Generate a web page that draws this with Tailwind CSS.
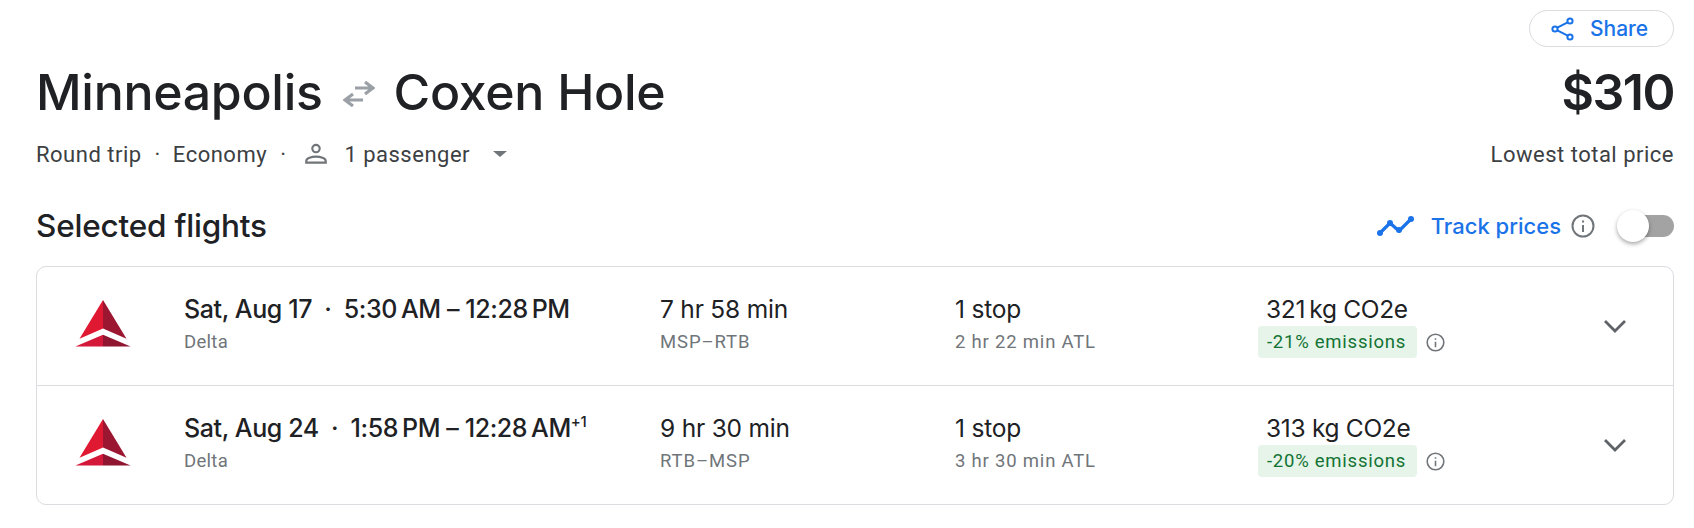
<!DOCTYPE html>
<html lang="en">
<head>
  <meta charset="UTF-8">
  <title>Flights</title>
  <script src="https://cdn.jsdelivr.net/npm/@tailwindcss/browser@4"></script>
</head>
<body class="bg-white font-['Roboto',sans-serif] text-[#3c4043] overflow-hidden">
  <div class="w-[1694px] h-[528px] pl-[36px] pr-[20px] pt-[10px]">

    <!-- share -->
    <div class="flex justify-end h-[37px]">
      <button class="w-[145px] h-[37px] rounded-full border border-[#dadce0] flex items-center pl-[21px] gap-[15px] text-[#1a73e8] font-['Inter',sans-serif] font-medium text-[21px]">
        <svg class="w-[24px] h-[24px]" viewBox="0 0 24 24" fill="none" stroke="#1a73e8" stroke-width="2"><circle cx="19" cy="4" r="2.6"/><circle cx="4" cy="12" r="2.6"/><circle cx="19" cy="20" r="2.6"/><path d="M6.3 10.7 16.7 5.3M6.3 13.3l10.4 5.4"/></svg>
        Share
      </button>
    </div>

    <!-- title + price -->
    <div class="flex justify-between items-center h-[64px] mt-[13px] font-['Inter',sans-serif] font-medium text-[#202124]">
      <div class="flex items-center text-[50px] tracking-[-0.3px]">
        <span>Minneapolis</span>
        <svg class="w-[32px] h-[26px] ml-[20px] mr-[19px] mt-[3px]" viewBox="0 0 32 26" fill="none" stroke="#9aa0a6" stroke-width="3.2"><path d="M31 7H12M22 1l8 6-8 6M1 19h19M10 13l-8 6 8 6"/></svg>
        <span>Coxen Hole</span>
      </div>
      <div class="text-[50px] font-semibold tracking-[-1.5px]">$310</div>
    </div>

    <!-- trip options -->
    <div class="flex justify-between items-center h-[28px] mt-[16px] text-[22px] tracking-[0.5px]">
      <div class="flex items-center">
        <span>Round trip</span>
        <span class="ml-[13px] mr-[12px]">·</span>
        <span>Economy</span>
        <span class="ml-[13px] mr-[17px]">·</span>
        <svg class="w-[26px] h-[26px] mr-[15px]" viewBox="0 0 24 24" fill="none" stroke="#70757a" stroke-width="2"><circle cx="12" cy="7" r="3.4"/><path d="M3 20v-1.6c0-2.4 5-4 9-4s9 1.600 9 4V20z"/></svg>
        <span>1 passenger</span>
        <span class="ml-[23px] w-0 h-0 border-x-[7px] border-x-transparent border-t-[6px] border-t-[#70757a]"></span>
      </div>
      <div>Lowest total price</div>
    </div>

    <!-- section heading -->
    <div class="flex justify-between items-center h-[40px] mt-[38px]">
      <h2 class="font-['Inter',sans-serif] font-medium text-[31.5px] text-[#202124] tracking-[-0.2px]">Selected flights</h2>
      <div class="flex items-center">
        <svg class="w-[37px] h-[20px]" viewBox="0 0 37 20" fill="none" stroke="#1a73e8" stroke-width="3.2"><path d="M3 17 13 7l9 8L34 3"/><g fill="#1a73e8" stroke="none"><circle cx="3" cy="17" r="3"/><circle cx="13" cy="7" r="3"/><circle cx="22" cy="14" r="3"/><circle cx="34" cy="3" r="3"/></g></svg>
        <span class="ml-[17px] font-['Inter',sans-serif] font-medium text-[22px] text-[#1a73e8]">Track prices</span>
        <svg class="w-[24px] h-[24px] ml-[10px]" viewBox="0 0 24 24" fill="none" stroke="#70757a" stroke-width="2"><circle cx="12" cy="12" r="10.500"/><path d="M12 11v7M12 6.500v2"/></svg>
        <div class="relative w-[56px] h-[22px] ml-[23px] rounded-full bg-[#a3a3a3]">
          <div class="absolute left-[-1px] top-[-5px] w-[32px] h-[32px] rounded-full bg-white shadow-[0_2px_4px_rgba(0,0,0,0.35)]"></div>
        </div>
      </div>
    </div>

    <!-- flights card -->
    <div class="mt-[20px] h-[239px] rounded-[10px] border border-[#dadce0] flex flex-col divide-y divide-[#dadce0]">

      <div class="flex-1 grid grid-cols-[147px_476px_295px_303px_1fr] items-center">
        <svg class="w-[58px] h-[47px] ml-[37px] mb-[6px]" viewBox="0 0 56 46">
          <path d="M28 0 5 38l23-10z" fill="#e01933"/><path d="M28 0l23 38-23-10z" fill="#9b1631"/>
          <path d="M28 34 1 45.500h27z" fill="#d3183a"/><path d="M28 34l27 11.500H28z" fill="#8f1530"/>
        </svg>
        <div class="mb-[5px]">
          <div class="font-['Inter',sans-serif] font-medium text-[25px] leading-[30px] text-[#202124] whitespace-nowrap tracking-[-0.4px]">Sat, Aug 17 <span class="mx-[6px]">·</span> 5:30&#8239;AM – 12:28&#8239;PM</div>
          <div class="mt-[6px] text-[18.5px] leading-[24px] text-[#70757a] tracking-[0.3px]">Delta</div>
        </div>
        <div class="mb-[5px]">
          <div class="font-['Inter',sans-serif] text-[24.5px] leading-[30px] text-[#202124] tracking-[-0.2px]">7 hr 58 min</div>
          <div class="mt-[6px] text-[18.5px] leading-[24px] text-[#70757a] tracking-[0.9px]">MSP–RTB</div>
        </div>
        <div class="mb-[5px]">
          <div class="font-['Inter',sans-serif] text-[24.5px] leading-[30px] text-[#202124] tracking-[-0.2px]">1 stop</div>
          <div class="mt-[6px] text-[18.5px] leading-[24px] text-[#70757a] tracking-[0.8px]">2 hr 22 min ATL</div>
        </div>
        <div class="flex items-center justify-between pr-[47px]">
          <div>
            <div class="pl-[8px] font-['Inter',sans-serif] text-[24.5px] leading-[30px] pb-[2px] text-[#202124] tracking-[-0.3px]">321&#8239;kg CO2e</div>
            <div class="flex items-center">
              <span class="w-[159px] h-[32px] rounded-[4px] bg-[#e6f4ea] pl-[9px] text-[18.5px] leading-[32px] text-[#137333] tracking-[0.75px]">-21% emissions</span>
              <svg class="w-[19px] h-[19px] ml-[9px]" viewBox="0 0 24 24" fill="none" stroke="#70757a" stroke-width="2"><circle cx="12" cy="12" r="10.500"/><path d="M12 11v7M12 6.500v2"/></svg>
            </div>
          </div>
          <svg class="w-[22px] h-[14px]" viewBox="0 0 22 14" fill="none" stroke="#5f6368" stroke-width="2.800"><path d="m1 2 10 10L21 2"/></svg>
        </div>
      </div>

      <div class="flex-1 grid grid-cols-[147px_476px_295px_303px_1fr] items-center">
        <svg class="w-[58px] h-[47px] ml-[37px] mb-[6px]" viewBox="0 0 56 46">
          <path d="M28 0 5 38l23-10z" fill="#e01933"/><path d="M28 0l23 38-23-10z" fill="#9b1631"/>
          <path d="M28 34 1 45.500h27z" fill="#d3183a"/><path d="M28 34l27 11.500H28z" fill="#8f1530"/>
        </svg>
        <div class="mb-[5px]">
          <div class="font-['Inter',sans-serif] font-medium text-[25px] leading-[30px] text-[#202124] whitespace-nowrap tracking-[-0.4px]">Sat, Aug 24 <span class="mx-[6px]">·</span> 1:58&#8239;PM – 12:28&#8239;AM<sup class="top-[-10px] text-[15px]">+1</sup></div>
          <div class="mt-[6px] text-[18.5px] leading-[24px] text-[#70757a] tracking-[0.3px]">Delta</div>
        </div>
        <div class="mb-[5px]">
          <div class="font-['Inter',sans-serif] text-[24.5px] leading-[30px] text-[#202124] tracking-[-0.2px]">9 hr 30 min</div>
          <div class="mt-[6px] text-[18.5px] leading-[24px] text-[#70757a] tracking-[0.9px]">RTB–MSP</div>
        </div>
        <div class="mb-[5px]">
          <div class="font-['Inter',sans-serif] text-[24.5px] leading-[30px] text-[#202124] tracking-[-0.2px]">1 stop</div>
          <div class="mt-[6px] text-[18.5px] leading-[24px] text-[#70757a] tracking-[0.8px]">3 hr 30 min ATL</div>
        </div>
        <div class="flex items-center justify-between pr-[47px]">
          <div>
            <div class="pl-[8px] font-['Inter',sans-serif] text-[24.5px] leading-[30px] pb-[2px] text-[#202124] tracking-[-0.3px]">313 kg CO2e</div>
            <div class="flex items-center">
              <span class="w-[159px] h-[32px] rounded-[4px] bg-[#e6f4ea] pl-[9px] text-[18.5px] leading-[32px] text-[#137333] tracking-[0.75px]">-20% emissions</span>
              <svg class="w-[19px] h-[19px] ml-[9px]" viewBox="0 0 24 24" fill="none" stroke="#70757a" stroke-width="2"><circle cx="12" cy="12" r="10.500"/><path d="M12 11v7M12 6.500v2"/></svg>
            </div>
          </div>
          <svg class="w-[22px] h-[14px]" viewBox="0 0 22 14" fill="none" stroke="#5f6368" stroke-width="2.800"><path d="m1 2 10 10L21 2"/></svg>
        </div>
      </div>

    </div>
  </div>
</body>
</html>
